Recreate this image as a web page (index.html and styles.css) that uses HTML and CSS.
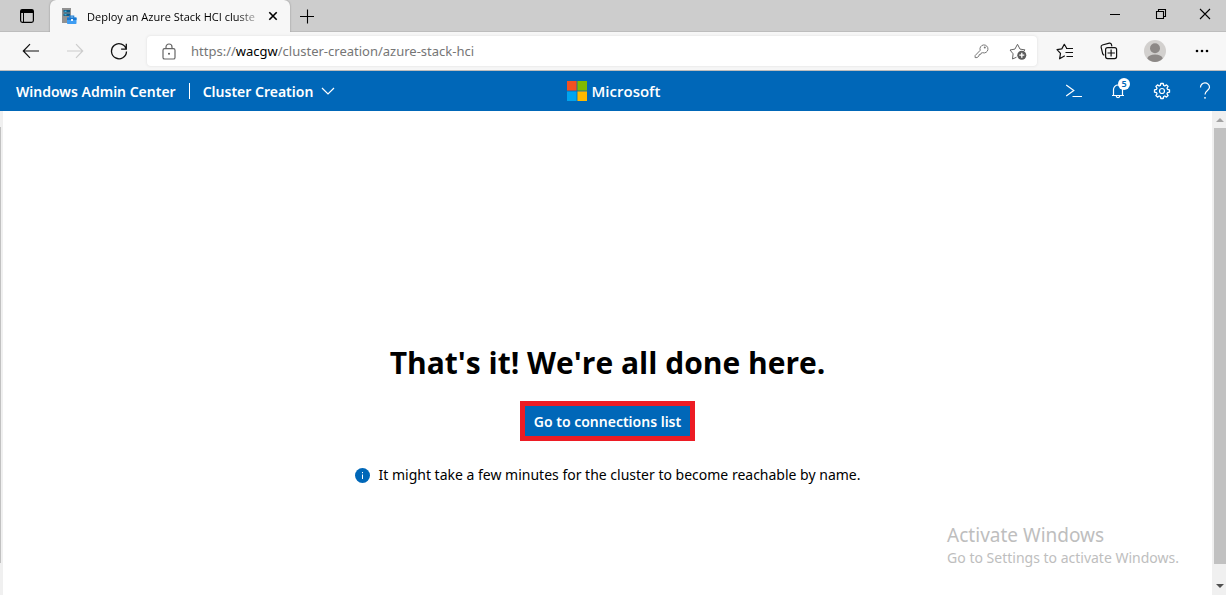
FILE: index.html
```html
<!DOCTYPE html>
<html lang="en">
<head>
<meta charset="utf-8">
<title>Deploy an Azure Stack HCI cluster</title>
<link rel="stylesheet" href="styles.css">
</head>
<body>
<header class="tabstrip">
  <button class="icon-btn tab-actions" aria-label="Tab actions menu">
    <svg width="16" height="16" viewBox="0 0 16 16"><rect x="1.6" y="1.6" width="12.8" height="12.8" rx="1.8" fill="none" stroke="#000" stroke-width="1.2"/><path d="M1.5 5V3.3Q1.5 1.5 3.3 1.5h9.4q1.8 0 1.8 1.8V5z" fill="#000"/><path d="M4.5 5v9" stroke="#000"/></svg>
  </button>
  <div class="tab">
    <svg class="favicon" width="16" height="18" viewBox="0 0 16 18"><path d="M1 1h9v15H1z" fill="#929292"/><path d="M2.500 3h6.500v2.500H2.500zM2.500 6.500h6.500V9H2.500z" fill="#125a85"/><path d="M3.500 3.800h2v1h-2zM3.500 7.300h2v1h-2z" fill="#50d4f7"/><path d="M8.700 11V9.100h4V11" fill="none" stroke="#2584d8" stroke-width="1.200"/><rect x="6" y="10.500" width="9.500" height="6.500" rx=".8" fill="#3f9df2"/><path d="M6 10.500h9.500v2.500H6z" fill="#1b78d0"/><path d="M10 12h2v2h-2z" fill="#e8f4ff"/></svg>
    <span class="tab-title">Deploy an Azure Stack HCI cluste</span>
    <button class="icon-btn" aria-label="Close tab"><svg width="10" height="10" viewBox="0 0 10 10"><path d="M1.3 1.3l7.4 7.4M8.7 1.3L1.3 8.7" stroke="#000" stroke-width="1.6"/></svg></button>
  </div>
  <button class="icon-btn new-tab" aria-label="New tab"><svg width="16" height="16" viewBox="0 0 16 16"><path d="M1 8.5h14M8.5 1.5v14" stroke="#000" stroke-width="1.1"/></svg></button>
  <div class="window-controls">
    <button class="icon-btn" aria-label="Minimize"><svg width="12" height="12" viewBox="0 0 12 12"><path d="M1 6.5h10" stroke="#000"/></svg></button>
    <button class="icon-btn" aria-label="Restore"><svg width="12" height="12" viewBox="0 0 12 12"><path d="M1.5 3.5h7v7h-7zM3.5 3.5v-2h7v7h-2" fill="none" stroke="#000" stroke-width="1.1"/></svg></button>
    <button class="icon-btn" aria-label="Close"><svg width="12" height="12" viewBox="0 0 12 12"><path d="M1 1l10 10M11 1L1 11" stroke="#000" stroke-width="1.1"/></svg></button>
  </div>
</header>

<nav class="toolbar" aria-label="Browser">
  <div class="nav-buttons">
    <button class="icon-btn" aria-label="Back"><svg width="18" height="16" viewBox="0 0 18 16"><path d="M17 8H1.5M8 1.2L1.3 8 8 14.8" fill="none" stroke="#111" stroke-width="1.2"/></svg></button>
    <button class="icon-btn" aria-label="Forward" disabled><svg width="18" height="16" viewBox="0 0 18 16"><path d="M1 8h15.5M10 1.2L16.7 8 10 14.8" fill="none" stroke="#ccc" stroke-width="1.2"/></svg></button>
    <button class="icon-btn" aria-label="Refresh"><svg width="18" height="18" viewBox="0 0 18 18"><path d="M16.3 7.5A7.5 7.5 0 1 0 16.5 9.5M16.3 1.8v5.4h-5.2" fill="none" stroke="#111" stroke-width="1.3"/></svg></button>
  </div>
  <div class="address">
    <svg width="14" height="17" viewBox="0 0 14 17"><rect x="1" y="5.6" width="12" height="10.4" rx="1.6" fill="none" stroke="#666" stroke-width="1.2"/><path d="M4 5.5V4a3 3 0 0 1 6 0v1.5" fill="none" stroke="#666" stroke-width="1.2"/><circle cx="7" cy="10.8" r="1" fill="#555"/></svg>
    <a class="url" href="#">https://<span class="host">wacgw</span>/cluster-creation/azure-stack-hci</a>
    <button class="icon-btn" aria-label="Saved passwords"><svg width="15" height="16" viewBox="0 0 15 16"><path d="M6.2 7.3A4 4 0 1 1 8.6 9.7L7.4 9.9 6.9 11.2 5.3 11.5 4.9 13.1 3 14.6H1.1V12.6z" fill="none" stroke="#777" stroke-linejoin="round"/><circle cx="10.8" cy="4.6" r="1" fill="#777"/></svg></button>
    <button class="icon-btn" aria-label="Add to favorites"><svg width="18" height="17" viewBox="0 0 18 17"><path d="M7.5 14.2L3.5 16l.6-5.2L1 7l4.900-.9L8.500 1.300l2.500 4.800 5 .8-1.600 1.700" fill="none" stroke="#666" stroke-linejoin="round"/><circle cx="12.8" cy="12.2" r="4.5" fill="#5c5c5c"/><path d="M10.3 12.2h5M12.8 9.7v5" stroke="#fff" stroke-width="1.3"/></svg></button>
  </div>
  <div class="browser-actions">
    <button class="icon-btn" aria-label="Favorites"><svg width="18" height="17" viewBox="0 0 18 17"><path d="M8.8 12.8L3.6 15.8l.9-5.4L1 6.7l4.8-.8L8.3 1.3l2.4 3.9M10 5.5h7M9.5 9.5H17M10.5 13.5H17" fill="none" stroke="#111" stroke-width="1.2" stroke-linejoin="round"/></svg></button>
    <button class="icon-btn" aria-label="Collections"><svg width="18" height="18" viewBox="0 0 18 18"><path d="M4.3 13.2Q3.2 13 2.7 11.8L1.1 5.2Q.9 3.5 2.4 3L9.3 1.2q1.6-.3 2.1 1.1l.5 2.1" fill="none" stroke="#111" stroke-width="1.2"/><rect x="5.6" y="5.6" width="11" height="11" rx="2" fill="#f7f7f7" stroke="#111" stroke-width="1.2"/><path d="M7.5 11h7.4M11.1 7.5v7" stroke="#111" stroke-width="1.2"/></svg></button>
    <button class="icon-btn" aria-label="Profile"><svg width="22" height="22" viewBox="0 0 22 22"><circle cx="11" cy="11" r="11" fill="#d2d0ce"/><circle cx="11" cy="8.3" r="5" fill="#8d8987"/><path d="M3.2 18.2Q5 14.5 11 14.5t7.8 3.7Q15.500 22 11 22t-7.800-3.800z" fill="#8d8987"/></svg></button>
    <button class="icon-btn" aria-label="Settings and more"><svg width="16" height="4" viewBox="0 0 16 4"><circle cx="3" cy="2" r="1.3"/><circle cx="8" cy="2" r="1.3"/><circle cx="13" cy="2" r="1.3"/></svg></button>
  </div>
</nav>

<div class="app">
  <header class="app-bar">
    <div class="crumbs">
      <a href="#">Windows Admin Center</a>
      <button class="solution">Cluster Creation
        <svg width="14" height="8" viewBox="0 0 14 8"><path d="M1 1l6 6 6-6" fill="none" stroke="#fff" stroke-width="1.2"/></svg>
      </button>
    </div>
    <div class="brand">
      <svg width="20" height="20" viewBox="0 0 20 20"><path d="M0 0h9.600v9.600H0z" fill="#f25022"/><path d="M10.400 0H20v9.600h-9.600z" fill="#7fba00"/><path d="M0 10.400h9.600V20H0z" fill="#00a4ef"/><path d="M10.400 10.400H20V20h-9.600z" fill="#ffb900"/></svg>
      <span>Microsoft</span>
    </div>
    <div class="app-actions">
      <button class="icon-btn" aria-label="PowerShell"><svg width="18" height="16" viewBox="0 0 18 16"><path d="M1.200 2l7.600 5.500L1.200 13M7.500 13.500H17" fill="none" stroke="#fff" stroke-width="1.200"/></svg></button>
      <button class="icon-btn bell" aria-label="Notifications, 5 new"><svg width="14" height="16" viewBox="0 0 14 16"><path d="M1 12.500h12M2.500 12.500V6.500a4.500 4.500 0 0 1 9 0v6M5.200 12.800a1.800 1.800 0 0 0 3.600 0" fill="none" stroke="#fff" stroke-width="1.200"/></svg><span class="badge">5</span></button>
      <button class="icon-btn" aria-label="Settings"><svg width="18" height="18" viewBox="-9 -9 18 18"><path d="M-1.200-7.500H1.200L1.700-5.500 2.800-5 4.500-6.100 6.100-4.500 5-2.800 5.500-1.700 7.500-1.200V1.200L5.500 1.700 5 2.800 6.100 4.500 4.500 6.100 2.800 5 1.700 5.500 1.200 7.500H-1.200L-1.700 5.500-2.800 5-4.500 6.100-6.100 4.500-5 2.800-5.500 1.700-7.500 1.200V-1.200L-5.500-1.700-5-2.800-6.100-4.500-4.500-6.100-2.800-5-1.700-5.500z" fill="none" stroke="#fff" stroke-width="1.300" stroke-linejoin="round"/><circle r="2.500" fill="none" stroke="#fff" stroke-width="1.200"/></svg></button>
      <button class="icon-btn" aria-label="Help"><svg width="12" height="18" viewBox="0 0 12 18"><path d="M1.500 5.500a4.500 4.500 0 0 1 9-.2C10.500 8.500 6 8.500 6 12.500" fill="none" stroke="#fff" stroke-width="1.200"/><circle cx="6" cy="15.800" r=".9" fill="#fff"/></svg></button>
    </div>
  </header>
  <div class="viewport">
    <div class="rail"></div>
    <main class="done">
      <h1>That's it! We're all done here.</h1>
      <button class="primary">Go to connections list</button>
      <p class="note"><svg width="15" height="15" viewBox="0 0 15 15"><circle cx="7.500" cy="7.500" r="7.500" fill="#0067b8"/><path d="M7.500 6.500v4.500M7.500 4v1.200" stroke="#fff"/></svg>It might take a few minutes for the cluster to become reachable by name.</p>
    </main>
    <div class="scrollbar">
      <svg width="14" height="17" viewBox="0 0 14 17"><path d="M4 11l4-4 4 4z" fill="#a3a3a3"/></svg>
      <div class="thumb"></div>
      <svg width="14" height="17" viewBox="0 0 14 17"><path d="M4 6l4 4 4-4z" fill="#505050"/></svg>
    </div>
  </div>
</div>
<aside class="watermark">
  <p class="watermark-title">Activate Windows</p>
  <p>Go to Settings to activate Windows.</p>
</aside>
</body>
</html>
```

FILE: styles.css
```css
* { box-sizing: border-box; }
body { margin: 0; min-height: 100vh; display: flex; flex-direction: column; font-family: "Noto Sans", "Open Sans", sans-serif; font-size: 14px; color: #000; background: #fff; }
h1, p { margin: 0; }
a { color: inherit; text-decoration: none; }
button { font: inherit; color: inherit; border: 0; padding: 0; background: none; }
svg { display: block; flex: none; }
.icon-btn { display: flex; align-items: center; justify-content: center; flex: none; }

.tabstrip { display: flex; height: 32px; background: #cdcdcd; border-bottom: 1px solid #bdbdbd; }
.tab-actions { width: 50px; padding-left: 4px; }
.tab { display: flex; align-items: center; width: 240px; height: 32px; padding: 0 12px 0 11px; background: #f7f7f7; border-radius: 6px 6px 0 0; box-shadow: 0 0 2px #888; clip-path: inset(0 -3px 0 -3px); }
.favicon { margin-right: 10px; }
.tab-title { flex: 1; min-width: 0; margin-right: 4px; overflow: hidden; white-space: nowrap; font-family: "Open Sans", sans-serif; font-size: 11px; mask-image: linear-gradient(to right, #000 84%, transparent); }
.new-tab { width: 34px; }
.window-controls { display: flex; margin-left: auto; }
.window-controls .icon-btn { width: 46px; padding-bottom: 3px; }
.window-controls .icon-btn:last-child { width: 42px; }

.toolbar { display: flex; align-items: center; gap: 16px; height: 39px; padding: 0 14px 0 22px; background: #f7f7f7; border-bottom: 1px solid #bdbdbd; }
.nav-buttons { display: flex; gap: 26px; margin-right: 3px; }
.address { flex: 1; display: flex; align-items: center; height: 30px; padding: 0 10px 0 15px; background: #fff; border-radius: 4px; box-shadow: 0 0 3px #ddd; }
.url { flex: 1; margin-left: 15px; color: #767676; font-size: 13px; }
.host { color: #000; }
.address .icon-btn + .icon-btn { margin-left: 20px; }
.browser-actions { display: flex; align-items: center; gap: 26px; margin-left: 3px; }
.browser-actions .icon-btn:last-child { width: 20px; }

.app { flex: 1; display: flex; flex-direction: column; }
.app-bar { display: grid; grid-template-columns: 1fr auto 1fr; align-items: center; height: 40px; padding: 0 15px 0 16px; background: #0067b8; color: #fff; font-weight: 600; }
.crumbs { display: flex; align-items: center; }
.solution { display: flex; align-items: center; gap: 8px; height: 16px; margin-left: 13px; padding-left: 13px; border-left: 1px solid #fff; }
.brand { display: flex; align-items: center; gap: 5px; font-family: "Open Sans", sans-serif; font-size: 15px; }
.app-actions { display: flex; align-items: center; justify-content: flex-end; gap: 28px; }
.bell { position: relative; }
.badge { position: absolute; left: 7px; top: -5px; width: 12px; height: 12px; border-radius: 50%; background: #fff; color: #0067b8; font-size: 9px; line-height: 12px; }

.viewport { flex: 1; display: flex; }
.rail { width: 3px; background: #f0f0f0; display: flex; }
.rail::before { content: ""; width: 1px; margin: 16px 0 32px; background: #c1c1c1; }
.done { flex: 1; display: flex; flex-direction: column; align-items: center; padding-top: 230px; }
h1 { font-family: "Open Sans", sans-serif; font-size: 30px; line-height: 44px; font-weight: 700; }
.primary { margin-top: 16px; height: 40px; padding: 0 9px; border: 5px solid #ed1c24; background: #0067b8; color: #fff; font-weight: 600; }
.note { display: flex; align-items: center; gap: 9px; margin-top: 24px; line-height: 20px; }
.scrollbar { width: 14px; display: flex; flex-direction: column; background: #f0f0f0; }
.thumb { flex: 1; margin: 0 0 14px 2px; background: #c1c1c1; }
.watermark { position: absolute; right: 47px; bottom: 27px; color: #bebebe; line-height: 20px; }
.watermark-title { font-size: 19px; line-height: 26px; }
```
